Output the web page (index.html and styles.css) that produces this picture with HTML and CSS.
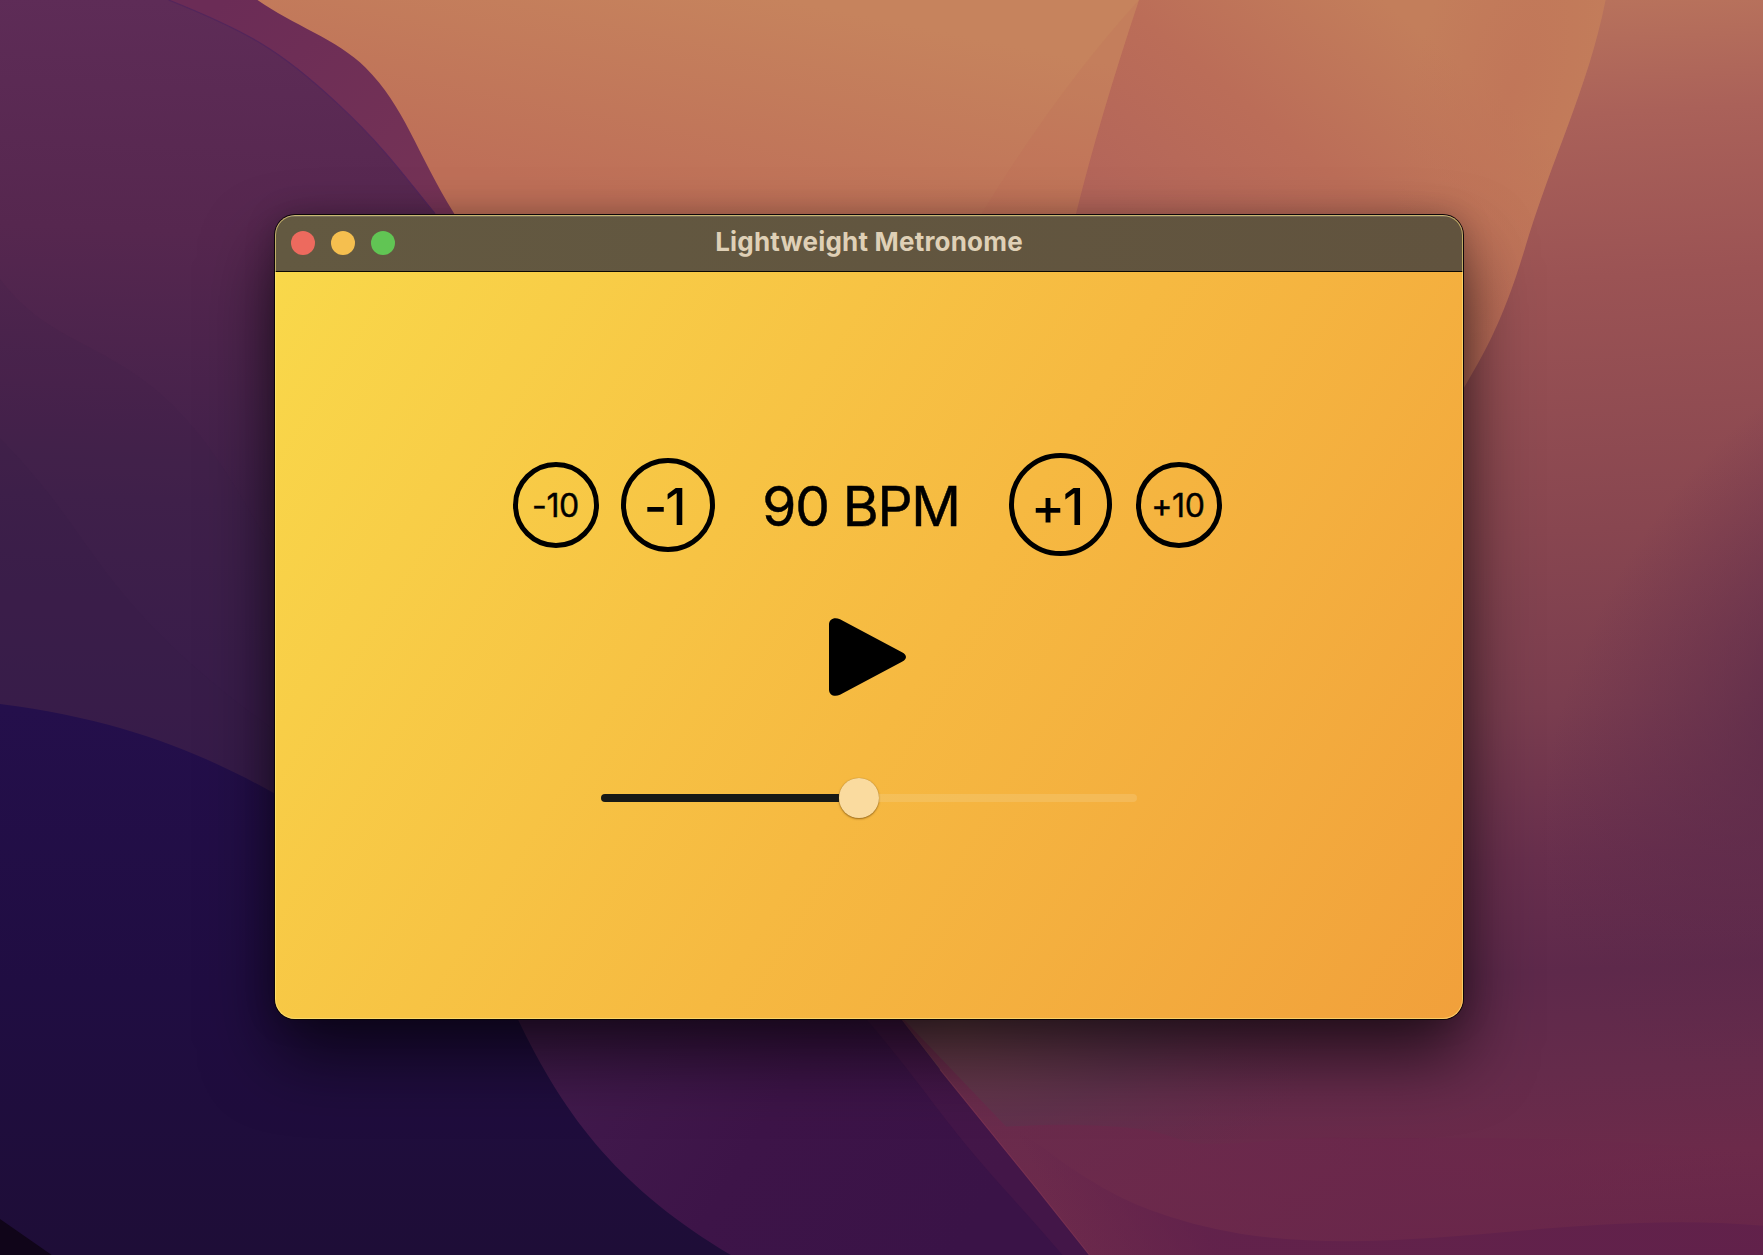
FILE: index.html
```html
<!DOCTYPE html>
<html lang="en">
<head>
<meta charset="utf-8">
<title>Lightweight Metronome</title>
<link rel="stylesheet" href="styles.css">
</head>
<body>
<svg class="wallpaper" viewBox="0 0 1568 1116" preserveAspectRatio="none" aria-hidden="true">
  <defs>
    <linearGradient id="sand" gradientUnits="userSpaceOnUse" x1="700" y1="0" x2="660" y2="200"><stop offset="0" stop-color="#c6835d"/><stop offset="1" stop-color="#be6f58"/></linearGradient>
    <linearGradient id="dune" gradientUnits="userSpaceOnUse" x1="1040" y1="230" x2="1230" y2="0"><stop offset="0" stop-color="#b3655a"/><stop offset=".5" stop-color="#bb6d58"/><stop offset="1" stop-color="#c37e5b"/></linearGradient>
    <linearGradient id="right" gradientUnits="userSpaceOnUse" x1="1420" y1="0" x2="1480" y2="1116"><stop offset="0" stop-color="#b8725c"/><stop offset=".09" stop-color="#aa6159"/><stop offset=".22" stop-color="#9b5354"/><stop offset=".42" stop-color="#884650"/><stop offset=".56" stop-color="#7a3d4f"/><stop offset=".68" stop-color="#682f4d"/><stop offset=".77" stop-color="#5e294b"/><stop offset=".85" stop-color="#652b4b"/><stop offset=".92" stop-color="#6c2a4a"/><stop offset="1" stop-color="#672549"/></linearGradient>
    <linearGradient id="plum" gradientUnits="userSpaceOnUse" x1="130" y1="0" x2="100" y2="680"><stop offset="0" stop-color="#5e2c57"/><stop offset=".3" stop-color="#56274f"/><stop offset=".65" stop-color="#40204a"/><stop offset="1" stop-color="#371b4b"/></linearGradient>
    <linearGradient id="ridge" gradientUnits="userSpaceOnUse" x1="200" y1="0" x2="390" y2="190"><stop offset="0" stop-color="#6b2c56"/><stop offset="1" stop-color="#753356"/></linearGradient>
    <linearGradient id="indigo" gradientUnits="userSpaceOnUse" x1="0" y1="630" x2="0" y2="1116"><stop offset="0" stop-color="#240f4b"/><stop offset=".5" stop-color="#200d42"/><stop offset="1" stop-color="#1e0d37"/></linearGradient>
    <linearGradient id="violet" gradientUnits="userSpaceOnUse" x1="500" y1="900" x2="850" y2="1116"><stop offset="0" stop-color="#421b4d"/><stop offset=".5" stop-color="#3d1448"/><stop offset="1" stop-color="#3a1347"/></linearGradient>
    <radialGradient id="dusk" gradientUnits="userSpaceOnUse" cx="0" cy="0" r="1" gradientTransform="translate(1630 620) rotate(30) scale(220 360)"><stop offset="0" stop-color="#5a2949" stop-opacity=".9"/><stop offset=".4" stop-color="#5b2a4a" stop-opacity=".5"/><stop offset="1" stop-color="#5e294b" stop-opacity="0"/></radialGradient>
    <radialGradient id="haze" gradientUnits="userSpaceOnUse" cx="0" cy="0" r="1" gradientTransform="translate(850 910) scale(330 170)"><stop offset="0" stop-color="#6e424c"/><stop offset=".5" stop-color="#60344d" stop-opacity=".8"/><stop offset="1" stop-color="#632d4c" stop-opacity="0"/></radialGradient>
    <linearGradient id="rose" gradientUnits="userSpaceOnUse" x1="900" y1="0" x2="1568" y2="0"><stop offset="0" stop-color="#6c2a4c"/><stop offset=".5" stop-color="#6a274b"/><stop offset="1" stop-color="#6a274b" stop-opacity="0"/></linearGradient>
    <linearGradient id="wine" gradientUnits="userSpaceOnUse" x1="930" y1="1060" x2="1030" y2="1010"><stop offset="0" stop-color="#5f204b" stop-opacity="0"/><stop offset="1" stop-color="#5f204b"/></linearGradient>
    <radialGradient id="glow" gradientUnits="userSpaceOnUse" cx="0" cy="0" r="1" gradientTransform="translate(1345 80) rotate(15) scale(90 240)"><stop offset="0" stop-color="#c07358" stop-opacity=".7"/><stop offset="1" stop-color="#c07358" stop-opacity="0"/></radialGradient>
  </defs>
  <rect width="1568" height="1116" fill="url(#right)"/>
  <rect x="1200" y="200" width="368" height="850" fill="url(#dusk)"/>
  <rect x="780" y="740" width="420" height="350" fill="url(#haze)"/>
  <path d="M900 250L990 0H1428C1412 80 1380 140 1355 225C1335 290 1320 315 1290 365L950 365Z" fill="url(#dune)"/>
  <path d="M900 250L990 0H1428C1412 80 1380 140 1355 225C1335 290 1320 315 1290 365L950 365Z" fill="url(#glow)"/>
  <path d="M200 0H1013Q978 105 957 190L940 260H350Z" fill="url(#sand)"/>
  <path d="M1013 0Q940 80 870 195H956Q978 105 1013 0Z" fill="#b9635a" opacity=".15"/>
  <path d="M0 0H229C260 22 300 35 325 60C360 95 370 135 404 190L460 300V720H0Z" fill="url(#ridge)"/>
  <path d="M0 0H150C220 28 250 45 300 92C345 134 362 160 387 190L450 300V760H0Z" fill="url(#plum)"/>
  <path d="M0 248C50 315 110 300 180 390C210 430 230 470 250 500V720H0Z" fill="#371d49" opacity=".12"/>
  <path d="M0 390C90 480 80 530 245 650V720H0Z" fill="#2e1949" opacity=".1"/>
  <path d="M790 892L895 1002C950 998 990 1001 1014 1004S1050 1016 1067 1017C1120 1018 1150 1010 1200 1012S1350 1005 1568 1025V1116H968Z" fill="url(#rose)" opacity=".8"/>
  <path d="M895 1002C925 1015 940 1032 964 1046Q995 1066 1023 1076Q1060 1090 1103 1097C1250 1120 1400 1075 1568 1090V1116H968Z" fill="url(#wine)" opacity=".75"/>
  <path d="M440 860H766L802 907L836 951L922 1057L969 1116H400Z" fill="url(#violet)"/>
  <path d="M771 907C800 940 825 975 851 1008S910 1075 945 1116H969L922 1057L836 951L790 892Z" fill="#4c1949" opacity=".5"/>
  <path d="M836 951L922 1057L969 1116" fill="none" stroke="#803553" stroke-width="1" opacity=".8"/>
  <path d="M0 626C110 640 180 670 245 706L440 860C490 980 540 1050 650 1116H0Z" fill="url(#indigo)"/>
  <path d="M0 1084L46 1116H0Z" fill="#100519"/>
  <path d="M150 0C220 28 250 45 300 92C345 134 362 160 387 190" fill="none" stroke="#53265b" stroke-width="1"/>
</svg>
<main class="desktop">
  <section class="window">
    <header class="titlebar">
      <div class="lights"><i class="light close"></i><i class="light minimize"></i><i class="light expand"></i></div>
      <h1 class="title">Lightweight Metronome</h1>
    </header>
    <div class="content">
      <div class="tempo">
        <button class="step small">-10</button>
        <button class="step minus">-1</button>
        <div class="bpm">90 BPM</div>
        <button class="step plus">+1</button>
        <button class="step small last">+10</button>
      </div>
      <button class="play" aria-label="Play">
        <svg width="77" height="78" viewBox="0 0 77 78"><path d="M0 6.5C0 1 5.5-1.5 11 1.3L73 34.2C78.3 37 78.3 41 73 43.8L11 76.7C5.5 79.5 0 77 0 71.5Z"/></svg>
      </button>
      <div class="slider"><div class="filled"></div><div class="thumb"></div><div class="rest"></div></div>
    </div>
  </section>
</main>
</body>
</html>
```
FILE: styles.css
```css
* { box-sizing: border-box; }
body {
  margin: 0;
  width: 1763px;
  height: 1255px;
  overflow: hidden;
  background: #3b1447;
  font-family: Inter, "Liberation Sans", sans-serif;
}
.wallpaper {
  position: absolute;
  inset: 0;
  width: 1763px;
  height: 1255px;
}
.desktop {
  position: relative;
  padding: 215px 0 0 275px;
}
.window {
  position: relative;
  width: 1188px;
  height: 804px;
  border-radius: 20px;
  display: flex;
  flex-direction: column;
  overflow: hidden;
  box-shadow: 0 0 0 1px #0d0608, 0 36px 70px rgba(0, 0, 0, .62), 0 0 30px rgba(0, 0, 0, .22);
}
.window::after {
  content: "";
  position: absolute;
  inset: 0;
  border-radius: 20px;
  box-shadow: inset 0 0 0 1px rgba(255, 232, 130, .6);
  pointer-events: none;
}
.titlebar {
  height: 57px;
  flex: none;
  display: grid;
  grid-template-columns: 1fr auto 1fr;
  align-items: center;
  padding: 0 16px;
  background: linear-gradient(90deg, #635941, #61533e);
  border-bottom: 1px solid #0c0903;
  box-shadow: inset 0 2px 0 rgba(255, 255, 255, .13);
}
.lights { display: flex; gap: 16px; }
.light { width: 24px; height: 24px; border-radius: 50%; }
.close { background: #ed6a5e; }
.minimize { background: #f5bf4f; }
.expand { background: #61c554; }
.title {
  margin: 0;
  padding-bottom: 2px;
  font-size: 26px;
  line-height: 52px;
  font-weight: 700;
  color: #dfd0b6;
  letter-spacing: .2px;
  white-space: nowrap;
}
.content {
  flex: 1;
  display: flex;
  flex-direction: column;
  align-items: flex-start;
  background: linear-gradient(122deg, #f9d84a 0%, #f6b941 54%, #f1a03b 100%);
}
.tempo {
  display: flex;
  align-items: center;
  margin: 181px 0 0 238px;
  height: 103px;
}
button {
  border: 0;
  padding: 0;
  margin: 0;
  background: none;
  font: inherit;
  color: #000;
}
.step {
  flex: none;
  display: flex;
  align-items: center;
  justify-content: center;
  border: 5px solid #000;
  border-radius: 50%;
  white-space: nowrap;
}
.small { width: 86px; height: 86px; padding: 1px 1px 0 0; font-size: 32px; -webkit-text-stroke: .4px #000; letter-spacing: -.3px; }
.minus { width: 94px; height: 94px; margin-left: 22px; padding: 3px 8px 0 0; font-size: 51px; font-weight: 500; letter-spacing: -2px; }
.plus { width: 103px; height: 103px; padding: 3px 8px 0 0; font-size: 51px; font-weight: 500; letter-spacing: -2px; }
.last { margin-left: 24px; padding-right: 2px; }
.bpm {
  width: 294px;
  padding: 2px 2px 0 0;
  text-align: center;
  font-size: 55px;
  -webkit-text-stroke: .5px #000;
  line-height: 66px;
  letter-spacing: -1.3px;
  white-space: nowrap;
}
.play { margin: 62px 0 0 554px; height: 78px; }
.play svg { display: block; }
.slider {
  display: flex;
  align-items: center;
  width: 536px;
  height: 40px;
  margin: 82px 0 0 326px;
}
.filled { width: 238px; height: 8px; border-radius: 4px 0 0 4px; background: #171916; }
.thumb {
  width: 40px;
  height: 40px;
  border-radius: 50%;
  background: #fadb9f;
  box-shadow: 0 1px 2px rgba(100, 60, 0, .6), 0 0 1px rgba(100, 60, 0, .4);
}
.rest { flex: 1; height: 8px; border-radius: 0 4px 4px 0; background: rgba(245, 215, 160, .26); }
```
